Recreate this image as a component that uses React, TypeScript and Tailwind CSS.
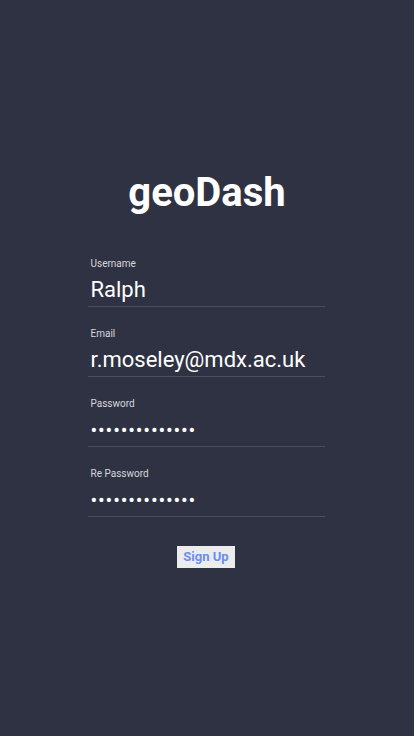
import React from 'react'

type FieldProps = {
  label: string
  value: string
  secret?: boolean
}

const Field = ({ label, value, secret }: FieldProps) => {
  return (
    <div className="h-[50px] flex flex-col border-b border-[#4a4e5e] px-[3px]">
      <span className="text-[10px] leading-[12px] text-[#d6d7dd] mt-[1px]">{label}</span>
      {secret ? (
        <span className="text-[20px] leading-[26px] tracking-[0.8px] text-white mt-[7px]">
          {'\u2022'.repeat(value.length)}
        </span>
      ) : (
        <span className="text-[22px] leading-[26px] text-white mt-[7px]">{value}</span>
      )}
    </div>
  )
}

const App = () => {
  return (
    <div
      className="w-[414px] h-[736px] bg-[#2f3243] flex flex-col items-center"
      style={{ fontFamily: 'Roboto, "Liberation Sans", sans-serif' }}
    >
      <h1 className="mt-[169px] text-[40px] leading-[48px] font-bold text-white">geoDash</h1>

      <div className="w-[237px] mt-[40px] ml-[-2px] flex flex-col gap-[20px]">
        <Field label="Username" value="Ralph" />
        <Field label="Email" value="r.moseley@mdx.ac.uk" />
        <Field label="Password" value="aaaaaaaaaaaaaa" secret />
        <Field label="Re Password" value="aaaaaaaaaaaaaa" secret />
      </div>

      <button className="mt-[29px] ml-[-2px] w-[58px] h-[22px] bg-[#ececec] text-[#6b8cf5] text-[13px] font-bold">
        Sign Up
      </button>
    </div>
  )
}

export default App
